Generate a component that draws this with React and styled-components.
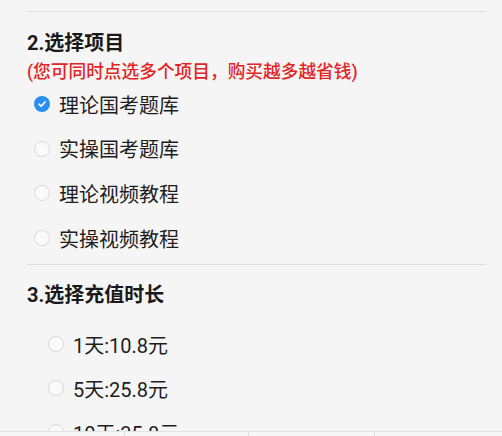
import React from 'react';
import styled, { createGlobalStyle } from 'styled-components';

const GlobalStyle = createGlobalStyle`
  html, body {
    margin: 0;
    padding: 0;
    background: #f5f5f5;
    overflow: hidden;
  }
  body {
    font-family: Roboto, "Noto Sans CJK SC", sans-serif;
    color: #1e1e1e;
  }
`;

const Page = styled.div`
  display: flex;
  flex-direction: column;
  padding: 0 16px 0 27px;
  height: 436px;
  overflow: hidden;

  & > * {
    flex-shrink: 0;
  }
`;

const TopStrip = styled.div`
  height: 11px;
  overflow: hidden;
  display: flex;
  align-items: flex-end;
`;

const FadedText = styled.div`
  font-size: 15px;
  line-height: 15px;
  color: #e2e2e2;
  margin-bottom: 10px;
  padding-left: 30px;
  white-space: nowrap;
`;

const Divider = styled.div`
  height: 1px;
  background: #dcdcdc;
  margin-top: ${p => p.$top || 0}px;
`;

const Heading = styled.div`
  font-size: 20px;
  font-weight: 700;
  line-height: 24px;
  margin-top: ${p => p.$top}px;
  color: #1a1a1a;
`;

const Note = styled.div`
  font-size: 17.7px;
  font-weight: 500;
  line-height: 22px;
  margin-top: 6px;
  color: #e22424;
  white-space: nowrap;
`;

const OptionList = styled.div`
  display: flex;
  flex-direction: column;
  margin-top: ${p => p.$top}px;
  padding-left: ${p => p.$indent}px;
`;

const Option = styled.div`
  display: flex;
  align-items: center;
  height: ${p => p.$h}px;
  gap: 9px;
  font-size: 20px;
  color: #1e1e1e;
  flex-shrink: 0;
`;

const Circle = styled.span`
  width: 16px;
  height: 16px;
  border-radius: 50%;
  box-sizing: border-box;
  display: inline-flex;
  align-items: center;
  justify-content: center;
  flex-shrink: 0;
  background: ${p => (p.$checked ? '#2b8ff0' : '#fafafa')};
  border: ${p => (p.$checked ? 'none' : '1px solid #d8d8d8')};
`;

const TabBar = styled.div`
  position: fixed;
  left: 0;
  right: 0;
  top: 431px;
  height: 50px;
  display: grid;
  grid-template-columns: 124px 124px 126px 1fr;
  background: #f7f7f7;
  border-top: 1px solid #e2e2e2;
`;

const Tab = styled.div`
  border-left: ${p => (p.$first ? 'none' : '1px solid #dedede')};
`;

const CheckMark = () => (
  <svg width="10" height="10" viewBox="0 0 10 10">
    <path d="M2 5.2 L4.2 7.2 L8 3" fill="none" stroke="#fff" strokeWidth="1.7" strokeLinecap="round" strokeLinejoin="round" />
  </svg>
);

const projects = [
  { label: '理论国考题库', checked: true },
  { label: '实操国考题库', checked: false },
  { label: '理论视频教程', checked: false },
  { label: '实操视频教程', checked: false },
];

const durations = ['1天:10.8元', '5天:25.8元', '10天:35.8元'];

const App = () => (
  <>
    <GlobalStyle />
    <Page>
      <TopStrip>
        <FadedText>理论国考题库 实操国考题库 理论视频教程</FadedText>
      </TopStrip>
      <Divider />
      <Heading $top={19}>2.选择项目</Heading>
      <Note>(您可同时点选多个项目，购买越多越省钱)</Note>
      <OptionList $top={-1} $indent={7}>
        {projects.map(p => (
          <Option key={p.label} $h={44.6}>
            <Circle $checked={p.checked}>{p.checked && <CheckMark />}</Circle>
            {p.label}
          </Option>
        ))}
      </OptionList>
      <Divider $top={4} />
      <Heading $top={18}>3.选择充值时长</Heading>
      <OptionList $top={15} $indent={21}>
        {durations.map(d => (
          <Option key={d} $h={44}>
            <Circle />
            {d}
          </Option>
        ))}
      </OptionList>
    </Page>
    <TabBar>
      <Tab $first />
      <Tab />
      <Tab />
      <Tab />
    </TabBar>
  </>
);

export default App;
